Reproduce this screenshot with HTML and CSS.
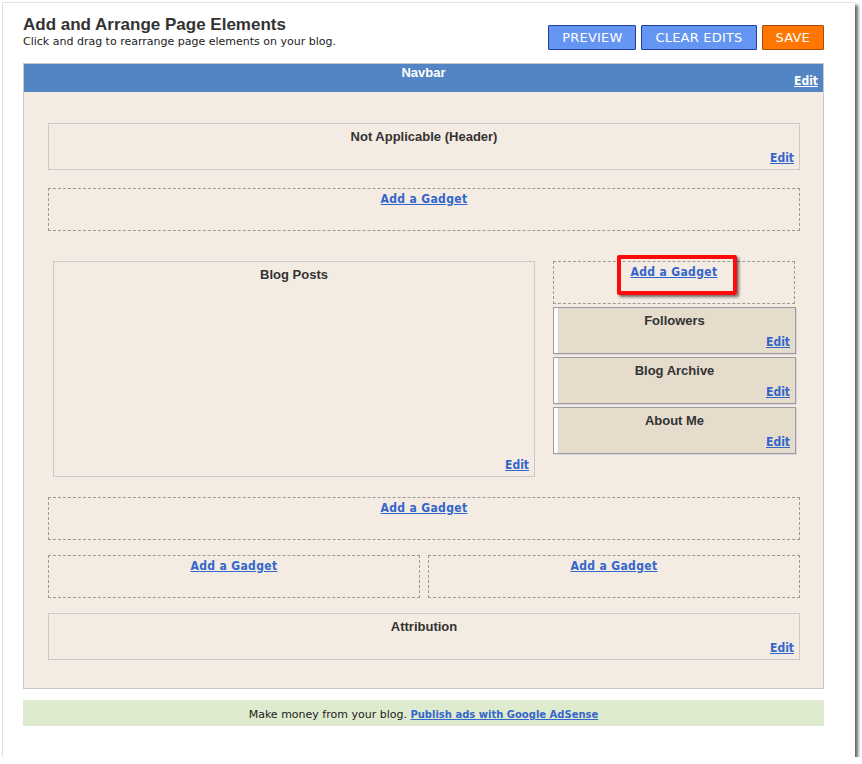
FILE: index.html
```html
<!DOCTYPE html>
<html>
<head>
<meta charset="utf-8">
<title>Add and Arrange Page Elements</title>
<link rel="stylesheet" href="styles.css">
</head>
<body>
<div class="window">
  <div class="topbar">
    <div class="heading">
      <h1 class="title">Add and Arrange Page Elements</h1>
      <div class="subtitle">Click and drag to rearrange page elements on your blog.</div>
    </div>
    <div class="actions">
      <button class="btn btn-blue">PREVIEW</button>
      <button class="btn btn-blue">CLEAR EDITS</button>
      <button class="btn btn-orange">SAVE</button>
    </div>
  </div>

  <div class="layout">
    <div class="navbar">
      <div class="navbar-title">Navbar</div>
      <a class="navbar-edit" href="#">Edit</a>
    </div>
    <div class="canvas">
      <div class="widget fixed">
        <div class="w-title">Not Applicable (Header)</div>
        <a class="w-edit" href="#">Edit</a>
      </div>

      <div class="gadget gap-18"><a href="#">Add a Gadget</a></div>

      <div class="columns">
        <div class="widget main">
          <div class="w-title">Blog Posts</div>
          <a class="w-edit" href="#">Edit</a>
        </div>
        <div class="sidebar">
          <div class="gadget side-gadget">
            <a href="#">Add a Gadget</a>
            <span class="highlight"></span>
          </div>
          <div class="widget drag">
            <div class="w-title">Followers</div>
            <a class="w-edit" href="#">Edit</a>
          </div>
          <div class="widget drag">
            <div class="w-title">Blog Archive</div>
            <a class="w-edit" href="#">Edit</a>
          </div>
          <div class="widget drag">
            <div class="w-title">About Me</div>
            <a class="w-edit" href="#">Edit</a>
          </div>
        </div>
      </div>

      <div class="gadget gap-20"><a href="#">Add a Gadget</a></div>

      <div class="pair">
        <div class="gadget"><a href="#">Add a Gadget</a></div>
        <div class="gadget"><a href="#">Add a Gadget</a></div>
      </div>

      <div class="widget fixed gap-15">
        <div class="w-title">Attribution</div>
        <a class="w-edit" href="#">Edit</a>
      </div>
    </div>
  </div>

  <div class="promo">Make money from your blog. <a href="#">Publish ads with Google AdSense</a></div>
</div>
</body>
</html>
```

FILE: styles.css
```css
html, body {
  margin: 0;
  padding: 0;
  background: #ffffff;
}

body {
  font-family: "DejaVu Sans", Verdana, sans-serif;
  color: #333333;
}

.window {
  box-sizing: border-box;
  width: 853px;
  height: 755px;
  margin: 2px 0 0 2px;
  padding: 12px 31px 0 20px;
  background: #ffffff;
  border-left: 1px solid #e2e2e2;
  border-top: 1px solid #e2e2e2;
  box-shadow: 3px 3px 3px rgba(0, 0, 0, 0.6);
}

/* ---------- header ---------- */
.topbar {
  display: flex;
  justify-content: space-between;
  align-items: flex-start;
  margin-bottom: 13px;
}

.title {
  margin: 0;
  font-family: "Liberation Sans", Arial, sans-serif;
  font-weight: bold;
  font-size: 17px;
  line-height: 20px;
  color: #333333;
}

.subtitle {
  font-size: 11px;
  line-height: 13px;
  color: #222222;
}

.actions {
  display: flex;
  gap: 5px;
  margin-top: 10px;
}

.btn {
  box-sizing: border-box;
  height: 25px;
  padding: 1px 13px 0 13px;
  font-family: "DejaVu Sans", Verdana, sans-serif;
  font-size: 13px;
  line-height: 22px;
  letter-spacing: 0.2px;
  color: #ffffff;
  cursor: pointer;
  border-radius: 1px;
}

.btn-blue {
  background: #6495f2;
  border: 1px solid #1f3f9a;
}

.btn-orange {
  background: #ff7700;
  border: 1px solid #a94a0a;
}

/* ---------- layout container ---------- */
.layout {
  border: 1px solid #c9c9c9;
  background: #f4ebe2;
}

.navbar {
  box-sizing: border-box;
  height: 28px;
  padding-top: 1px;
  display: flex;
  flex-direction: column;
  background: #5384c4;
}

.navbar-title {
  text-align: center;
  font-family: "Liberation Sans", Arial, sans-serif;
  font-weight: bold;
  font-size: 13px;
  line-height: 16px;
  color: #ffffff;
}

.navbar-edit {
  align-self: flex-end;
  margin: -7px 5px 0 0;
  font-family: "DejaVu Sans Condensed", "DejaVu Sans", sans-serif;
  font-stretch: condensed;
  font-weight: bold;
  font-size: 12px;
  line-height: 14px;
  color: #ffffff;
  text-decoration: underline;
}

.canvas {
  padding: 31px 23px 28px 24px;
}

/* ---------- widgets ---------- */
.widget {
  box-sizing: border-box;
  display: flex;
  flex-direction: column;
  padding: 5px 5px 4px 5px;
  border: 1px solid #cacaca;
}

.w-title {
  text-align: center;
  font-family: "Liberation Sans", Arial, sans-serif;
  font-weight: bold;
  font-size: 13px;
  line-height: 16px;
  color: #333333;
}

.w-edit {
  align-self: flex-end;
  margin-top: 6px;
  font-family: "DejaVu Sans Condensed", "DejaVu Sans", sans-serif;
  font-stretch: condensed;
  font-weight: bold;
  font-size: 12px;
  line-height: 14px;
  color: #3366cc;
  text-decoration: underline;
}

.gadget {
  box-sizing: border-box;
  height: 43px;
  padding-top: 3px;
  text-align: center;
  font-size: 12px;
  line-height: 14px;
  border: 1px dashed #9a9a9a;
}

.gadget a {
  font-family: "DejaVu Sans Condensed", "DejaVu Sans", sans-serif;
  font-stretch: condensed;
  font-weight: bold;
  font-size: 12px;
  line-height: 14px;
  color: #3366cc;
  text-decoration: underline;
  letter-spacing: 0.35px;
}

.gap-18 { margin-top: 18px; }
.gap-20 { margin-top: 20px; }
.gap-15 { margin-top: 15px; }

.columns {
  display: flex;
  align-items: flex-start;
  gap: 18px;
  margin-top: 30px;
  padding-left: 5px;
}

.widget.main {
  width: 482px;
  height: 216px;
  justify-content: space-between;
}

.sidebar {
  width: 242px;
  display: flex;
  flex-direction: column;
  gap: 3px;
}

.side-gadget {
  position: relative;
  width: 242px;
}

.highlight {
  position: absolute;
  left: 63px;
  top: -7px;
  width: 120px;
  height: 40px;
  box-sizing: border-box;
  border: 4px solid #ff0a0a;
  border-radius: 2px;
  box-shadow: 2px 2px 3px rgba(0, 0, 0, 0.55);
}

.widget.drag {
  width: 243px;
  border: 1px solid #9c9aa6;
  background-color: #e5dccb;
  background-image:
    radial-gradient(circle, #ffffff 0.7px, transparent 1px),
    radial-gradient(circle, #ffffff 0.7px, transparent 1px),
    linear-gradient(#d9d2c6, #d9d2c6);
  background-size: 2px 2px, 2px 2px, 5px 100%;
  background-repeat: repeat-y, repeat-y, no-repeat;
  background-position: 0 0, 2px 1px, 0 0;
  box-shadow: 1px 1px 0 #d9d5dc;
}

.pair {
  display: grid;
  grid-template-columns: 1fr 1fr;
  gap: 8px;
  margin-top: 15px;
}

/* ---------- footer promo ---------- */
.promo {
  margin-top: 11px;
  height: 26px;
  box-sizing: border-box;
  padding-top: 9px;
  background: #dfebcf;
  text-align: center;
  font-size: 11px;
  line-height: 12px;
  color: #222222;
}

.promo a {
  font-weight: bold;
  font-size: 10px;
  color: #3366cc;
  text-decoration: underline;
}
```
